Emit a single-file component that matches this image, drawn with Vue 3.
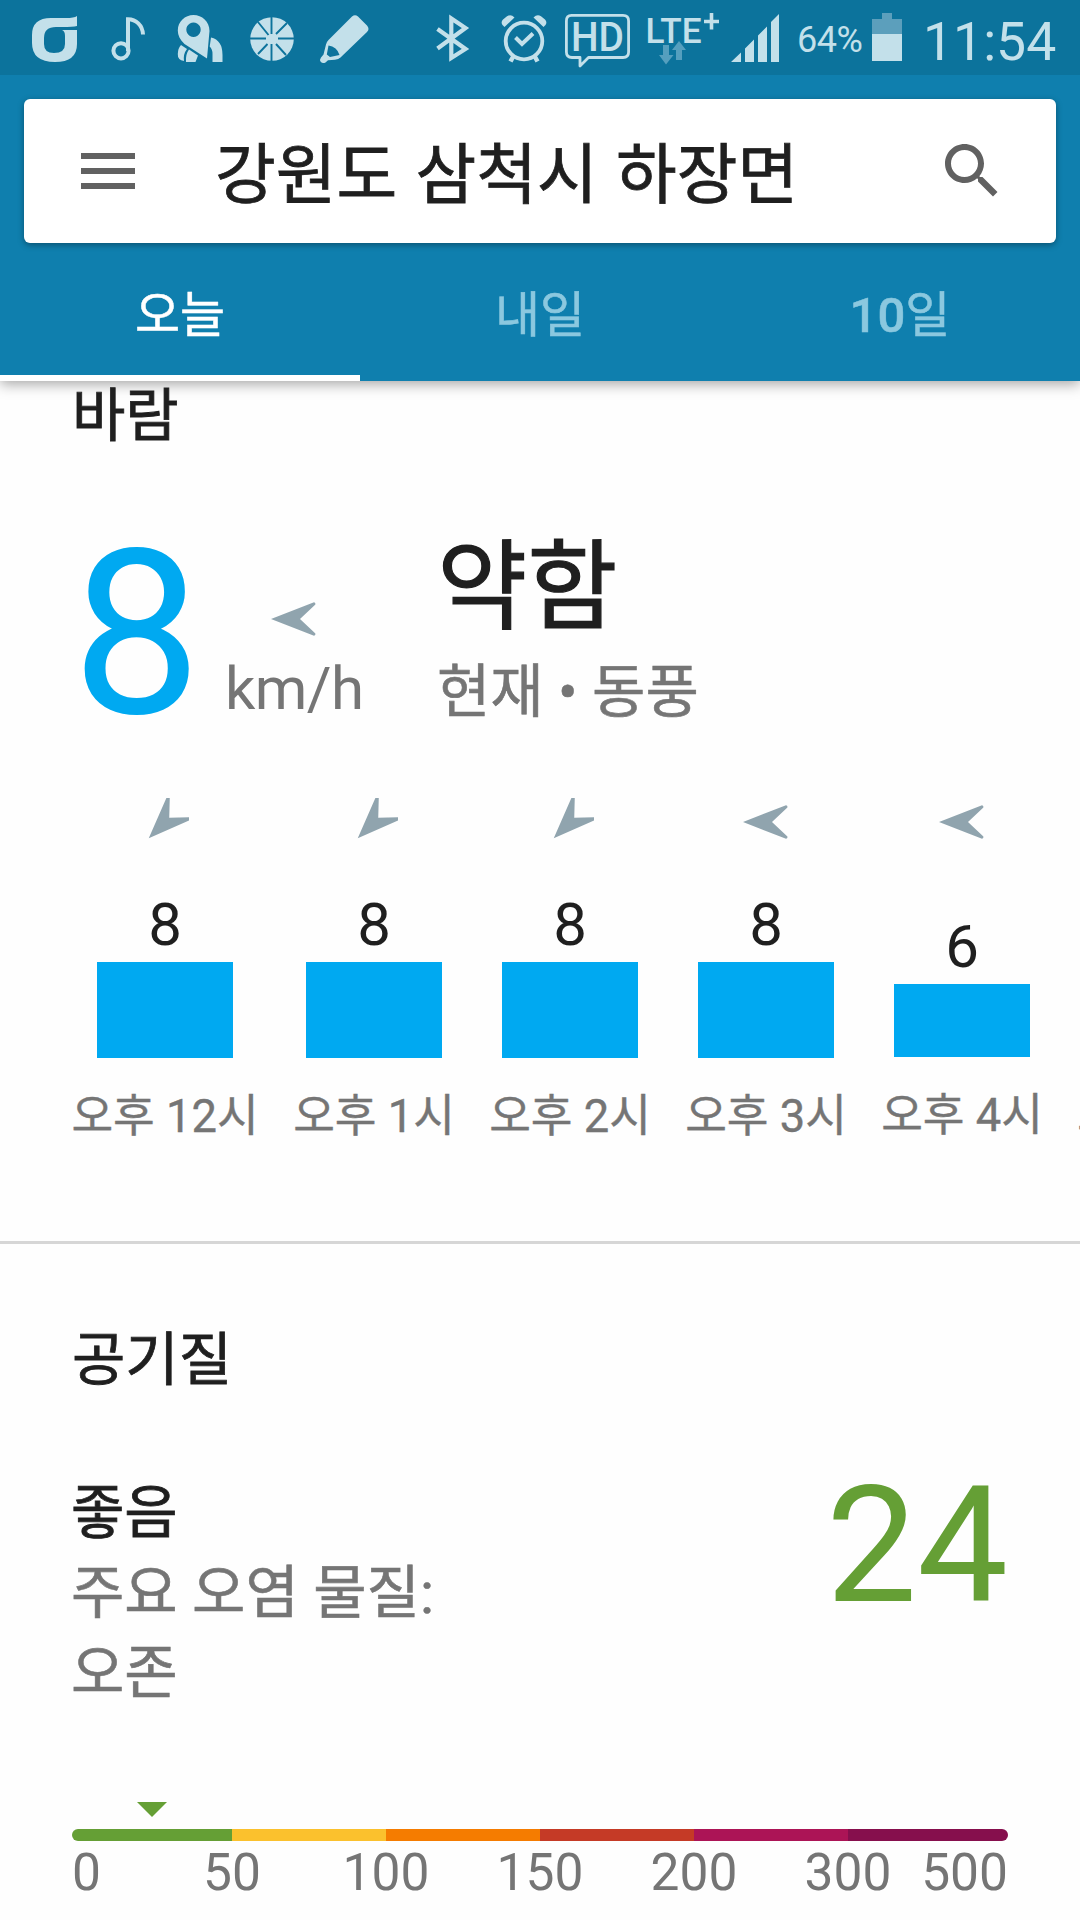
<script setup>
const hours = [
  { label: '오후 12시', value: 8, height: 96, plot: 212, turn: -45, width: 186 },
  { label: '오후 1시', value: 8, height: 96, plot: 212, turn: -45, width: 160 },
  { label: '오후 2시', value: 8, height: 96, plot: 212, turn: -45, width: 160 },
  { label: '오후 3시', value: 8, height: 96, plot: 212, turn: 0, width: 160 },
  { label: '오후 4시', value: 6, height: 73, plot: 211, turn: 0, width: 160 },
  { label: '오후 5시', value: '', height: 73, plot: 211, turn: 0, width: 160 },
]

const bands = [
  { color: '#659f35', width: 160 },
  { color: '#fbc12d', width: 154 },
  { color: '#f57c00', width: 154 },
  { color: '#c53a26', width: 154 },
  { color: '#ac1456', width: 154 },
  { color: '#860f4d', width: 160 },
]

const ticks = [0, 50, 100, 150, 200, 300, 500]
const tabs = [
  { num: '', word: '오늘' },
  { num: '', word: '내일' },
  { num: '10', word: '일' },
]
const arrow = 'M1 24 L44 7.2 Q45.8 7.6 45.4 9.4 L30 24 L45.4 38.6 Q45.8 40.4 44 40.8 Z'
</script>

<template>
  <div class="screen">
    <header class="header">
      <div class="status">
        <svg class="ic s1" viewBox="32 0 46 75" width="46" height="75">
          <path fill-rule="evenodd" d="M77 16 V26 Q73 27 62 27 H56 Q44 27 44 38 V44 Q44 53 54 53 Q65 53 65 44 V36 Q65 31 62 30 H77 V44 Q77 62 55 62 Q32 62 32 43 V35 Q32 18 51 18 H66 Q74 18 77 16 Z" />
        </svg>
        <svg class="ic s2" viewBox="111 0 35 75" width="35" height="75">
          <g fill="none" stroke="#c3e0ea" stroke-width="4">
            <circle cx="121" cy="50.8" r="7.6" />
            <path d="M128 51 V19.3 C136 19.5 142.500 25 143 34.500" />
          </g>
        </svg>
        <svg class="ic s3" viewBox="177 0 46 75" width="46" height="75">
          <path fill-rule="evenodd" d="M193.500 15 C202 15 209.500 21.500 209.500 31 L207 58.500 L184.500 44 C180 40 177.800 35 177.800 30.500 C177.800 21.500 185 15 193.500 15 Z M193.500 22.500 a7.200 7.200 0 1 0 .01 0 Z" />
          <path d="M181 45 L187 49 Q183 54 184 61 Q177.500 60 177.800 54 Q178 48 181 45 Z M189 49.500 L198 55.500 L195.500 62 H186 Q185.500 54 189 49.500 Z" />
          <path d="M211 37.500 Q222.500 40 222.500 55 V62 H212.500 V54 Q212.500 49 209.700 46.500 Z" />
        </svg>
        <svg class="ic s4" viewBox="250 0 44 75" width="44" height="75">
          <circle cx="272" cy="39" r="21.800" />
          <g stroke="#0c739c" stroke-width="1.900">
            <path d="M271.500 16 V34 M271.500 44 V62 M249 38.500 H266 M278 38.500 H295" />
            <path d="M258 22 L268.500 35 M287 23 L276 34 M258 54 L267.500 44 M286 55 L276 44" />
          </g>
        </svg>
        <svg class="ic s5" viewBox="319 0 51 75" width="51" height="75">
          <path fill-rule="evenodd" d="M352 16.500 Q355 14 358 16.500 L367 25.500 Q370 29 367 32 L340.500 57.500 Q338.500 59.500 335 59.800 L328 60.300 L325.500 62.500 Q322.500 64 320.500 61.500 Q319.500 59.500 321 57.500 L323.500 54.500 L326 44.500 Q326.500 42 328.500 40 Z M328.500 45.500 L326.800 54.500 L330 57 L339.500 55 Q338 50.500 335.500 48.500 Q332.500 46 328.500 45.500 Z" />
        </svg>

        <svg class="ic s6" viewBox="435 0 35 75" width="35" height="75">
          <path fill="none" stroke="#c3e0ea" stroke-width="4.200" d="M437.500 29 L465.500 49 L451.300 58 V18.500 L465.500 28 L437.500 48.500" />
        </svg>
        <svg class="ic s7" viewBox="501 0 46 75" width="46" height="75">
          <circle cx="524" cy="41" r="18.300" fill="none" stroke="#c3e0ea" stroke-width="3.800" />
          <path fill="none" stroke="#c3e0ea" stroke-width="4" d="M515.500 37.500 L522 44 L533 33.500" />
          <path fill="none" stroke="#c3e0ea" stroke-width="4.500" d="M513.500 56 L510.500 61.500 M534.500 56 L537.500 61.500" />
          <path d="M502.500 25 Q500.500 22 503 19.500 L507 16.200 Q511 14 514.500 17.500 L504.500 27 Z M545.500 25 Q547.500 22 545 19.500 L541 16.200 Q537 14 533.500 17.500 L543.500 27 Z" />
        </svg>
        <svg class="ic s8" viewBox="565 0 66 75" width="66" height="75">
          <path fill="none" stroke="#c3e0ea" stroke-width="2.800" stroke-linejoin="round" d="M571.500 15.400 H623 Q628.600 15.400 628.600 21 V52 Q628.600 57.500 623 57.500 H588.500 L580 66 V57.500 H572 Q566.400 57.500 566.400 52 V21 Q566.400 15.400 571.500 15.400 Z" />
          <text class="hd" x="571" y="51" textLength="53" lengthAdjust="spacingAndGlyphs">HD</text>
        </svg>
        <svg class="ic s9" viewBox="647 0 73 75" width="73" height="75">
          <text class="lte" x="645.500" y="43" textLength="56" lengthAdjust="spacingAndGlyphs">LTE</text>
          <path fill="none" stroke="#c3e0ea" stroke-width="3.600" d="M704 21.500 H719 M711.500 13 V29.500" />
          <path fill="#559fbe" d="M663 45 H669 V55 H673.500 L666 64.500 L659 55 H663 Z M679 41 L686 50 H682 V60 H676 V50 H672 Z" />
        </svg>
        <svg class="ic s10" viewBox="731 0 48 75" width="48" height="75">
          <path d="M731 62 L741 52.500 V62 Z M745 62 V48.500 L754 39.500 V62 Z M758 62 V35.500 L767 26.500 V62 Z M771 62 V22 L779 14 V62 Z" />
        </svg>
        <span class="pct">64%</span>
        <svg class="ic s11" viewBox="872 0 30 75" width="30" height="75">
          <path fill="#5c9fbc" d="M882 13 H892 V19 H902 V34 H872 V19 H882 Z" />
          <rect x="872" y="34" width="30" height="27" />
        </svg>
        <span class="clock">11:54</span>
      </div>

      <div class="search">
        <div class="menu"><i></i><i></i><i></i></div>
        <div class="place">강원도 삼척시 하장면</div>
        <svg class="find" viewBox="0 0 24 24" width="72" height="72">
          <path d="M15.500 14h-.79l-.28-.27C15.410 12.590 16 11.110 16 9.500 16 5.910 13.090 3 9.500 3S3 5.910 3 9.500 5.910 16 9.500 16c1.610 0 3.090-.59 4.230-1.570l.27.28v.79l5 4.990L20.490 19l-4.990-5zm-6 0C7.010 14 5 11.990 5 9.500S7.010 5 9.500 5 14 7.010 14 9.500 11.990 14 9.500 14z" />
        </svg>
      </div>

      <nav class="tabs">
        <div v-for="(tab, i) in tabs" :key="i" class="tab" :class="{ active: i === 0 }"><b v-if="tab.num">{{ tab.num }}</b>{{ tab.word }}</div>
      </nav>
    </header>

    <section class="wind">
      <h2 class="title">바람</h2>
      <div class="now">
        <div class="speed">8</div>
        <div class="unit">
          <svg viewBox="0 0 48 48" width="48" height="48"><path fill="#90a4ae" :d="arrow" /></svg>
          <span>km/h</span>
        </div>
        <div class="desc">
          <div class="level">약함</div>
          <div class="dir">현재 • 동풍</div>
        </div>
      </div>
      <div class="hours">
        <div v-for="h in hours" :key="h.label" class="hour" :style="{ width: h.width + 'px' }">
          <svg viewBox="0 0 48 48" width="48" height="48">
            <path fill="#90a4ae" :d="arrow" :transform="`rotate(${h.turn} 24 24)`" />
          </svg>
          <div class="plot" :style="{ height: h.plot + 'px' }">
            <span class="value">{{ h.value }}</span>
            <div class="bar" :style="{ height: h.height + 'px' }"></div>
          </div>
          <span class="time">{{ h.label }}</span>
        </div>
      </div>
    </section>

    <section class="air">
      <h2 class="title">공기질</h2>
      <div class="summary">
        <div class="lines">
          <div class="grade">좋음</div>
          <div>주요 오염 물질:</div>
          <div>오존</div>
        </div>
        <div class="index">24</div>
      </div>
      <svg class="marker" viewBox="0 0 30 15" width="30" height="15"><path fill="#659f35" d="M0 0 H30 L15 15 Z" /></svg>
      <div class="scale">
        <i v-for="b in bands" :key="b.color" :style="{ width: b.width + 'px', background: b.color }"></i>
      </div>
      <div class="ticks">
        <span v-for="t in ticks" :key="t">{{ t }}</span>
      </div>
    </section>
  </div>
</template>

<style>
body {
  margin: 0;
  background: #fefefe;
}
</style>

<style scoped>
.screen {
  width: 1080px;
  height: 1920px;
  overflow: hidden;
  background: #fefefe;
  color: #1f1f1f;
  font-family: Roboto, "Noto Sans CJK KR", sans-serif;
}
.header {
  height: 381px;
  display: flex;
  flex-direction: column;
  background: #0f7fae;
  box-shadow: 0 3px 13px rgba(0, 0, 0, 0.36);
}
.status {
  height: 75px;
  display: flex;
  flex: none;
  background: #0c739c;
  color: #c3e0ea;
  white-space: nowrap;
}
.ic {
  flex: none;
  fill: #c3e0ea;
}
.s1 { margin-left: 32px; }
.s2 { margin-left: 33px; }
.s3 { margin-left: 31px; }
.s4 { margin-left: 27px; }
.s5 { margin-left: 25px; }
.s6 { margin-left: 65px; }
.s7 { margin-left: 31px; }
.s8 { margin-left: 18px; }
.s9 { margin-left: 16px; }
.s10 { margin-left: 11px; }
.hd {
  font-size: 40px;
  font-weight: 500;
}
.lte {
  font-size: 35px;
  font-weight: 500;
}
.pct {
  width: 75px;
  margin-left: 18px;
  font-size: 36px;
  line-height: 81px;
  letter-spacing: -0.5px;
}
.clock {
  margin-left: 21px;
  font-size: 53.5px;
  line-height: 83px;
}
.search {
  flex: none;
  height: 144px;
  margin: 24px 24px 0;
  display: flex;
  align-items: center;
  background: #fff;
  border-radius: 6px;
  box-shadow: 0 2px 6px rgba(0, 0, 0, 0.35);
}
.menu {
  width: 54px;
  margin-left: 57px;
  display: flex;
  flex-direction: column;
  gap: 9px;
}
.menu i {
  height: 6px;
  background: #616161;
}
.place {
  flex: 1;
  margin-left: 80px;
  padding-top: 10px;
  font-size: 66px;
  line-height: 80px;
  word-spacing: 2px;
  -webkit-text-stroke: 0.8px currentColor;
  white-space: nowrap;
}
.find {
  margin-right: 48px;
  fill: #616161;
}
.tabs {
  flex: 1;
  display: flex;
}
.tab {
  flex: 1;
  box-sizing: border-box;
  padding-top: 7px;
  border-bottom: 6px solid transparent;
  color: #8bc8df;
  font-size: 49px;
  line-height: 132px;
  height: 138px;
  text-align: center;
  -webkit-text-stroke: 0.5px currentColor;
}
.tab b {
  font-weight: 500;
}
.tab.active {
  color: #fff;
  border-bottom-color: #fff;
}
.title {
  margin: 0;
  padding-top: 1px;
  font-size: 58px;
  line-height: 68px;
  font-weight: 400;
  -webkit-text-stroke: 0.8px currentColor;
}
.wind {
  box-sizing: border-box;
  height: 863px;
  padding-left: 72px;
  border-bottom: 3px solid #d6d6d6;
}
.now {
  display: flex;
  height: 200px;
  margin-top: 84px;
}
.speed {
  width: 153px;
  color: #00a9f1;
  font-size: 230px;
  line-height: 202px;
}
.unit {
  width: 212px;
  padding-top: 61px;
  color: #757575;
  font-size: 60px;
  line-height: 60px;
}
.unit svg {
  display: block;
  margin: 0 0 16px 45px;
}
.unit span {
  letter-spacing: -0.6px;
}
.level {
  padding-top: 2px;
  font-size: 98px;
  line-height: 104px;
  -webkit-text-stroke: 1.2px currentColor;
}
.dir {
  margin-top: 22px;
  color: #757575;
  font-size: 58px;
  line-height: 60px;
  -webkit-text-stroke: 0.6px currentColor;
}
.hours {
  display: flex;
  gap: 36px;
  margin-top: 64px;
  width: 1008px;
  overflow: hidden;
}
.hour {
  flex: none;
  display: flex;
  flex-direction: column;
  align-items: center;
}
.plot {
  display: flex;
  flex-direction: column;
  justify-content: flex-end;
  align-items: center;
}
.value {
  margin-bottom: 7px;
  font-size: 60px;
  line-height: 60px;
}
.bar {
  width: 136px;
  background: #00a9f1;
}
.time {
  margin-top: 31px;
  color: #757575;
  font-size: 45.3px;
  line-height: 56px;
  white-space: nowrap;
  -webkit-text-stroke: 0.4px currentColor;
}
.air {
  padding: 81px 72px 0;
}
.summary {
  display: flex;
  justify-content: space-between;
  margin-top: 71px;
  height: 247px;
}
.lines {
  margin-left: -1px;
  padding-top: 8px;
  color: #757575;
  font-size: 58px;
  line-height: 80px;
  -webkit-text-stroke: 0.6px currentColor;
}
.grade {
  color: #1f1f1f;
  -webkit-text-stroke: 0.8px currentColor;
}
.index {
  color: #659f35;
  font-size: 162px;
  line-height: 163px;
}
.marker {
  display: block;
  margin: 90px 0 12px 65px;
}
.scale {
  display: flex;
  height: 12px;
  border-radius: 6px;
  overflow: hidden;
}
.ticks {
  display: flex;
  margin-top: 2px;
  color: #757575;
  font-size: 51.5px;
  line-height: 60px;
}
.ticks span {
  width: 154px;
  text-align: center;
}
.ticks span:first-child {
  width: 83px;
  text-align: left;
}
.ticks span:last-child {
  width: 83px;
  display: flex;
  justify-content: flex-end;
}
</style>
